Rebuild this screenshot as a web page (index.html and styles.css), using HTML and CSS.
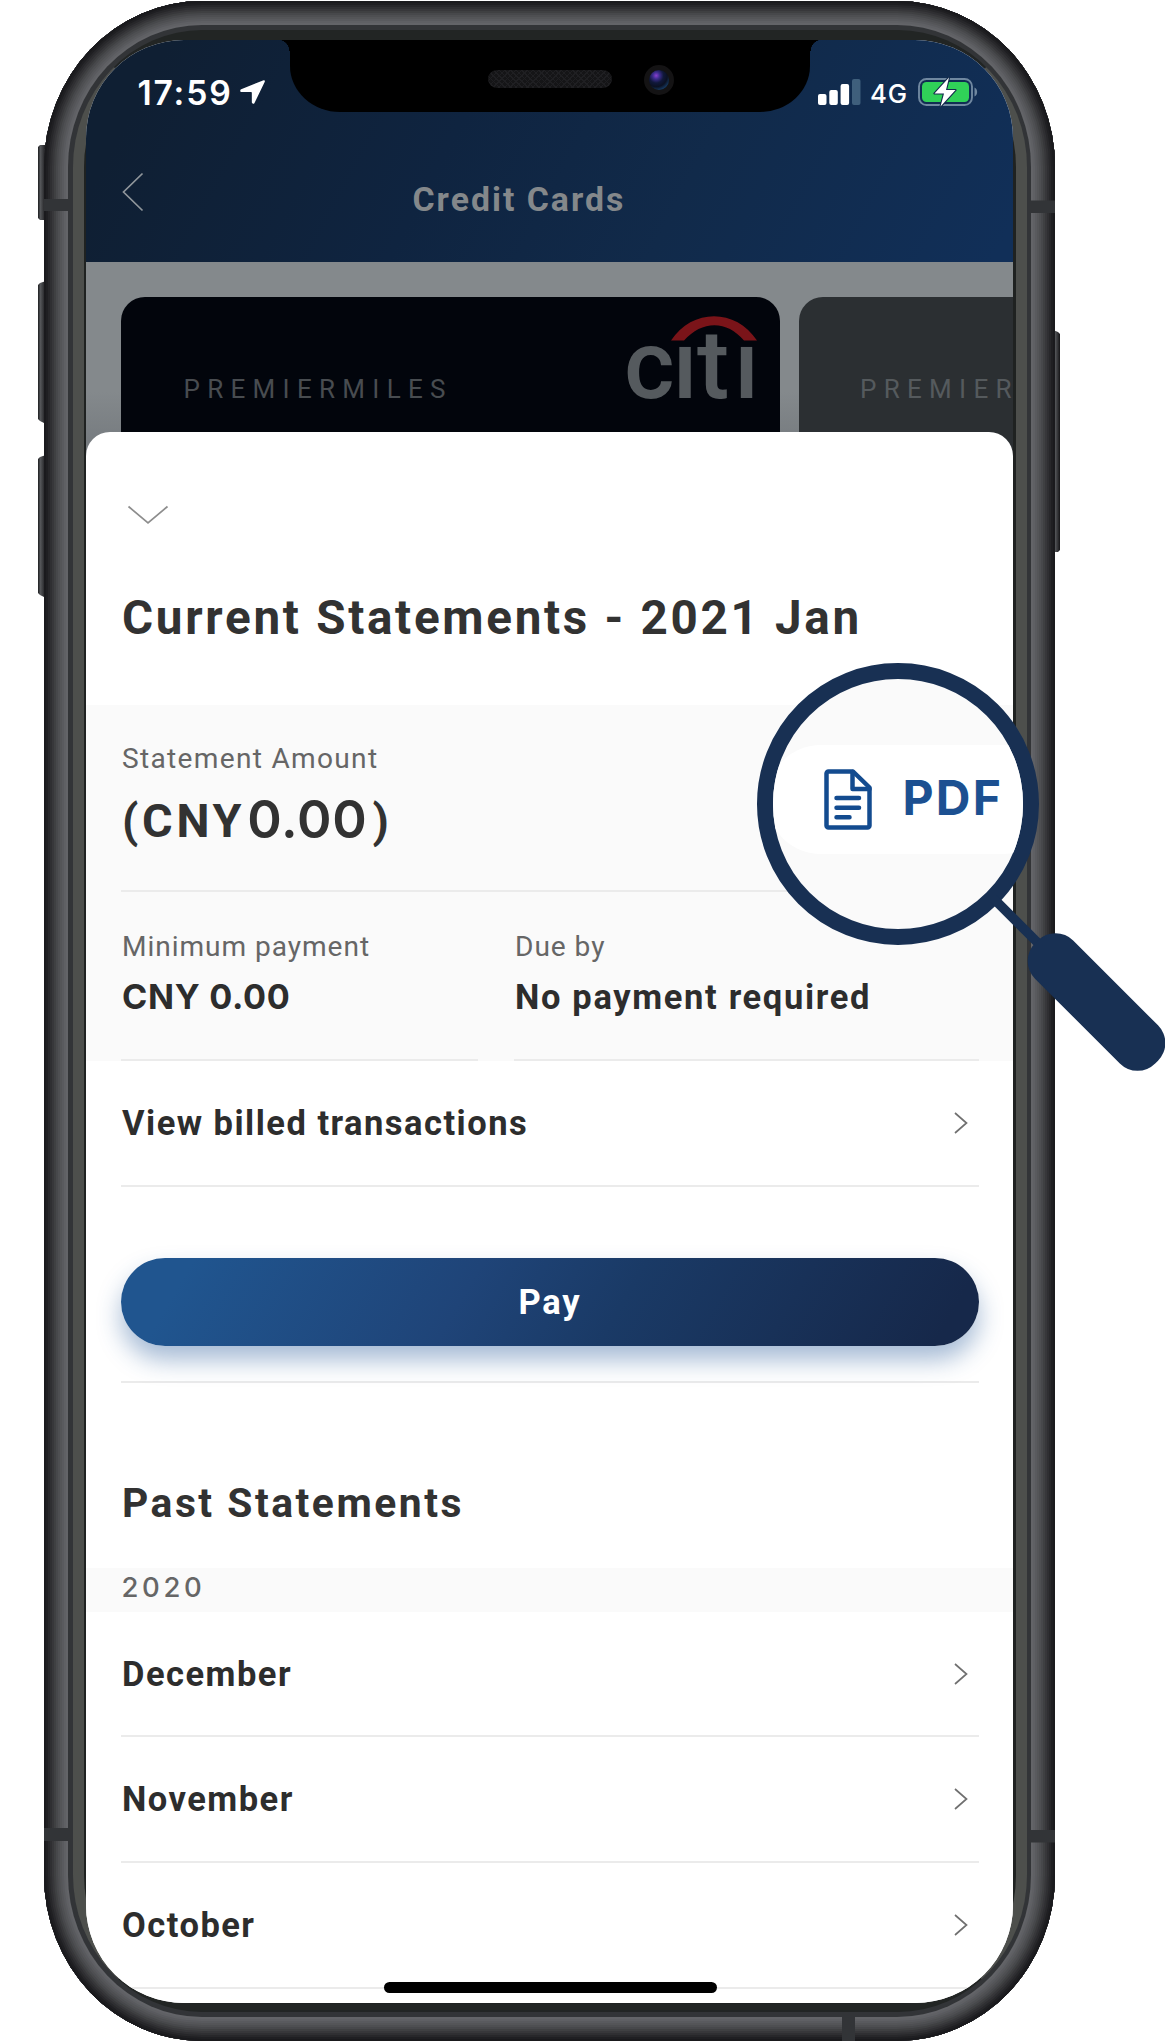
FILE: index.html
```html
<!DOCTYPE html>
<html lang="en">
<head>
<meta charset="utf-8">
<title>Credit Cards</title>
<link rel="stylesheet" href="styles.css">
</head>
<body>
<div class="stage">
  <svg class="side-buttons" width="1165" height="2042" viewBox="0 0 1165 2042" aria-hidden="true">
    <defs>
      <linearGradient id="btn" x1="0" x2="1" y1="0" y2="0">
        <stop offset="0" stop-color="#1c1d1f"/><stop offset=".3" stop-color="#55575a"/><stop offset=".6" stop-color="#3a3b3e"/><stop offset="1" stop-color="#141416"/>
      </linearGradient>
    </defs>
    <g fill="url(#btn)">
      <path d="M46 145h-6l-2 2v71l2 2h6z"/>
      <path d="M46 281l-6 2-2 2v134l2 2 6 3z"/>
      <path d="M46 455l-6 2-2 2v134l2 2 6 3z"/>
      <path d="M1053 330l5 2 2 2v216l-2 2h-5z"/>
    </g>
  </svg>

  <div class="device">
    <div class="rim">
      <div class="glass">
        <main class="screen">
          <header class="header">
            <div class="status">
              <div class="status-left">
                <span class="clock">17:59</span>
                <svg width="25" height="24" viewBox="0 0 26 25" fill="#fff"><path d="M24.6.3 1.2 9.6C-.3 10.200 0 12.500 1.500 12.500h10c.5 0 .8.3.8.8v10c0 1.700 2.200 2 2.800.6L25.800 1.700C26.200.6 25.500 0 24.600.3z"/></svg>
              </div>
              <div class="status-right">
                <svg width="43" height="28" viewBox="0 0 43 28" fill="#fff"><rect y="16" width="8.500" height="11" rx="2"/><rect x="11.300" y="12" width="8.500" height="15" rx="2"/><rect x="22.600" y="6" width="8.500" height="21" rx="2"/><rect x="34" y="1" width="8.500" height="26" rx="2" fill="#3f5f7c"/></svg>
                <span class="network">4G</span>
                <svg width="60" height="30" viewBox="0 0 60 30"><rect x="1" y="2" width="53" height="26" rx="7.500" fill="none" stroke="#7088a0" stroke-width="1.900"/><path d="M56.500 10.500c3.500 1.500 3.500 7.500 0 9z" fill="#7088a0"/><rect x="4" y="5" width="47" height="20" rx="4.500" fill="#30d158"/><path d="M31 .5 16.500 16.500h9.500L22.500 29.500 37.500 13H28z" fill="#fff" stroke="#132b4c" stroke-width="2.200" paint-order="stroke" stroke-linejoin="round"/></svg>
              </div>
            </div>
            <div class="nav">
              <svg class="back" width="22" height="40" viewBox="0 0 22 40" fill="none" stroke="#90969b" stroke-width="1.700"><path d="M20.500 1.500 1.500 20l19 18.500"/></svg>
              <h1>Credit Cards</h1>
            </div>
            <div class="notch">
              <div class="speaker"></div>
              <div class="camera"></div>
            </div>
          </header>

          <section class="cards">
            <article class="card card-dark">
              <span class="card-name">PREMIERMILES</span>
              <svg class="citi" width="134" height="90" viewBox="0 0 134 90">
                <path d="M43 25.500C64-7 108-7 129 25.500H116C99 5 74 5 56 25.500z" fill="#7a1419"/>
                <text y="83" x="-4 44.500 69 106" fill="#555a5e">cıtı</text>
              </svg>
            </article>
            <article class="card card-grey">
              <span class="card-name">PREMIERMILES</span>
            </article>
          </section>

          <section class="sheet">
            <div class="sheet-head">
              <svg width="42" height="20" viewBox="0 0 42 20" fill="none" stroke="#8d8d8d" stroke-width="1.700"><path d="M1.500 1.500 21 18 40.500 1.500"/></svg>
              <h2>Current Statements - 2021 Jan</h2>
            </div>

            <div class="summary">
              <div class="amount">
                <p class="label">Statement Amount</p>
                <p class="total"><span>(CNY</span><span class="figure">0.00</span><span>)</span></p>
              </div>
              <div class="facts">
                <div class="fact">
                  <p class="label">Minimum payment</p>
                  <p class="value value-num">CNY 0.00</p>
                </div>
                <div class="fact">
                  <p class="label">Due by</p>
                  <p class="value">No payment required</p>
                </div>
              </div>
            </div>

            <div class="row first"><span>View billed transactions</span><svg class="chev" viewBox="0 0 14 22"><path d="M1 1 12.500 11 1 21"/></svg></div>
            <div class="pay-wrap"><button class="pay" type="button">Pay</button></div>

            <h3>Past Statements</h3>
            <div class="year">2020</div>
            <div class="row"><span>December</span><svg class="chev" viewBox="0 0 14 22"><path d="M1 1 12.500 11 1 21"/></svg></div>
            <div class="row"><span>November</span><svg class="chev" viewBox="0 0 14 22"><path d="M1 1 12.500 11 1 21"/></svg></div>
            <div class="row"><span>October</span><svg class="chev" viewBox="0 0 14 22"><path d="M1 1 12.500 11 1 21"/></svg></div>
          </section>
          <div class="home-indicator"></div>
        </main>
      </div>
    </div>
  </div>

  <svg class="antennas" width="1165" height="2042" viewBox="0 0 1165 2042" fill="#323437" aria-hidden="true">
    <rect x="44" y="199" width="25" height="12"/><rect x="1031" y="200.500" width="24" height="12.500"/>
    <rect x="44" y="1828" width="25" height="13"/><rect x="1031" y="1830" width="24" height="12.500"/>
    <rect x="842" y="2017" width="13" height="24"/>
  </svg>

  <div class="lens">
    <div class="pdf">
      <svg width="48" height="61" viewBox="0 0 48 61" fill="none" stroke="#134b8f" stroke-width="4.500" stroke-linejoin="round" stroke-linecap="round"><path d="M29 2.500H4.500a2 2 0 0 0-2 2v52a2 2 0 0 0 2 2h39a2 2 0 0 0 2-2V18.500z"/><path d="M28.500 3v17h17M12.500 29h22.500M12.500 38.700h22.500M12.500 48.300h13"/></svg>
      <span>PDF</span>
    </div>
  </div>
  <svg class="handle" width="175" height="180" viewBox="990 895 175 180" aria-hidden="true">
    <path d="M992 897 1045 950" stroke="#183053" stroke-width="9.500"/>
    <rect x="-27" y="-85" width="54" height="170" rx="25" transform="translate(1096.500 1002) rotate(-45)" fill="#183053"/>
  </svg>
</div>
</body>
</html>
```
FILE: styles.css
```css
* { box-sizing: border-box; }

body, h1, h2, h3, p { margin: 0; }

body {
  background: #fff;
  font-family: Roboto, "Liberation Sans", sans-serif;
  color: #2d2d2d;
}

svg { display: block; flex: none; }

.stage {
  position: relative;
  width: 1165px;
  height: 2042px;
  padding: 1px 0 0 44px;
  overflow: hidden;
}

.side-buttons, .antennas {
  position: absolute;
  left: 0;
  top: 0;
}

/* Metal frame: concentric rings shade from dark outside to light inside */
.device {
  position: relative;
  width: 1011px;
  height: 2039.5px;
  padding: 23.5px 24px;
  border-radius: 158px / 166px;
  background: #636468;
  box-shadow:
    inset 0 0 0 2px #1a1a1d,
    inset 0 0 0 4px #1f1f22,
    inset 0 0 0 6px #27272a,
    inset 0 0 0 8px #2f2f32,
    inset 0 0 0 10px #37373a,
    inset 0 0 0 12px #3f4042,
    inset 0 0 0 14px #47484b,
    inset 0 0 0 16px #4e4f52,
    inset 0 0 0 18px #545558,
    inset 0 0 0 20px #595a5e,
    inset 0 0 0 22px #5f6064;
}

.rim {
  height: 100%;
  padding: 5px 4.5px;
  border-radius: 134px / 142px;
  background: #323437;
}

.glass {
  height: 100%;
  border-style: solid;
  border-width: 10px 11.5px 8px;
  border-color: #222524 #4d4f4c;
  border-radius: 129px / 137px;
  background: #1f2221;
  padding: 0 2px 0 2px;
}

.screen {
  position: relative;
  width: 927px;
  height: 1963px;
  border-radius: 98px;
  overflow: hidden;
  background: #fff;
}

.header {
  position: relative;
  height: 222px;
  background: linear-gradient(118deg, #0f1f33 8%, #0f2440 40%, #112a4a 65%, #112f58 98%);
}

.status {
  display: flex;
  justify-content: space-between;
  height: 104px;
  padding: 0 35px 0 52px;
  color: #fff;
}

.status-left, .status-right { display: flex; align-items: center; }

.clock {
  width: 102.5px;
  padding-top: 2px;
  font: 600 33.7px/40px Inter, sans-serif;
  letter-spacing: 1.8px;
}

.network {
  width: 56.5px;
  padding: 4px 0 0 9px;
  font: 500 25.8px/30px Inter, sans-serif;
  letter-spacing: 0.8px;
}

.nav { display: flex; height: 118px; padding-left: 36px; }

.back { margin-top: 28px; }

.nav h1 {
  margin: 36px 0 0 269px;
  font-size: 33.8px;
  line-height: 40px;
  letter-spacing: 2px;
  color: #84888b;
}

.notch {
  position: absolute;
  left: 204px;
  top: 0;
  width: 520px;
  height: 72px;
  background: #000;
  border-radius: 0 0 50px 50px / 0 0 46px 46px;
}

.notch::before, .notch::after {
  content: "";
  position: absolute;
  top: 0;
  width: 12px;
  height: 11px;
}

.notch::before { left: -12px; background: radial-gradient(circle at 0 100%, transparent 11px, #000 11.5px); }
.notch::after { right: -12px; background: radial-gradient(circle at 100% 100%, transparent 11px, #000 11.5px); }

.speaker {
  position: absolute;
  left: 198px;
  top: 30px;
  width: 124px;
  height: 18px;
  border-radius: 9px;
  background:
    repeating-linear-gradient(45deg, #1f1f22 0 1px, transparent 1px 4px),
    repeating-linear-gradient(-45deg, #1f1f22 0 1px, transparent 1px 4px),
    #151517;
}

.camera {
  position: absolute;
  left: 354px;
  top: 25px;
  width: 30px;
  height: 30px;
  border: 5px solid #141314;
  border-radius: 50%;
  background: radial-gradient(circle at 36% 28%, #8a3fd0 0, #3b2c8c 18%, #10183a 38%, #0b1122 58%, #1f5f9c 95%);
}

.cards {
  display: flex;
  gap: 19px;
  height: 194px;
  padding: 35px 0 0 35.5px;
  background: linear-gradient(#84898c 130px, #777c80 180px);
}

.card {
  display: flex;
  flex: none;
  width: 658.5px;
  border-radius: 24px 24px 0 0;
}

.card-dark { background: #02050c; color: #484c50; }
.card-grey { background: #2b2f32; color: #555a5d; }

.card-name {
  width: 442px;
  padding: 77px 0 0 62.5px;
  font-size: 26px;
  line-height: 30px;
  letter-spacing: 7.3px;
}

.card-grey .card-name { padding-left: 61.5px; }

.citi { margin: 18px 0 0 65px; overflow: visible; font: 500 97px Roboto, sans-serif; }

.sheet {
  position: relative;
  margin-top: -24px;
  height: 1571px;
  border-radius: 24px 24px 0 0;
  background: #fff;
}

.sheet-head { height: 273px; padding: 73px 33px 0 41.5px; }

.sheet-head h2 {
  margin: 63px 0 0 -5px;
  font-size: 47.6px;
  line-height: 60px;
  letter-spacing: 2.7px;
  color: #323232;
  white-space: nowrap;
}

.summary { height: 356px; padding: 0 33.5px 0 35.5px; background: #fafafa; }

.amount { height: 187px; padding-top: 34px; border-bottom: 2px solid #ebebeb; }

.label {
  padding-left: 1px;
  font-size: 28.1px;
  line-height: 40px;
  letter-spacing: 0.95px;
  color: #666;
}

.amount .label { letter-spacing: 1.3px; }

.total {
  display: flex;
  margin-top: 12px;
  padding-left: 1px;
  font: 700 46.8px/60px Roboto, sans-serif;
  letter-spacing: 3.7px;
  color: #323232;
}

.total .figure {
  margin: -2px 5px 0 2px;
  font: 600 52.3px/60px Inter, sans-serif;
  letter-spacing: 0.8px;
}

.facts { display: grid; grid-template-columns: 357px 1fr; gap: 36px; }

.fact { height: 169px; padding-top: 35px; border-bottom: 2px solid #ebebeb; }

.value {
  margin-top: 10px;
  padding-left: 1px;
  font-size: 34.5px;
  font-weight: 700;
  line-height: 40px;
  letter-spacing: 1.65px;
}

.value-num { font: 700 34.2px/40px Inter, sans-serif; letter-spacing: 0.7px; }

.row {
  display: flex;
  align-items: center;
  justify-content: space-between;
  height: 125.6px;
  margin: 0 33.5px 0 35.5px;
  padding: 0 11px 0 1px;
  border-bottom: 2px solid #ebebeb;
  font-size: 34.5px;
  font-weight: 700;
  letter-spacing: 1.48px;
}

.first { height: 126.4px; }

.chev { width: 14px; height: 22px; fill: none; stroke: #707070; stroke-width: 1.7; }

.pay-wrap {
  height: 196px;
  margin: 0 33.5px 0 35.5px;
  padding-top: 71px;
  border-bottom: 2px solid #ebebeb;
}

.pay {
  display: block;
  width: 100%;
  height: 88px;
  border: 0;
  border-radius: 44px;
  background: linear-gradient(120deg, #20558f 8%, #1f4478 40%, #1a3a66 58%, #16284a 95%);
  box-shadow: 0 14px 24px rgba(32, 85, 150, 0.4);
  font: 700 34.5px/40px Roboto, sans-serif;
  letter-spacing: 1.8px;
  color: #fff;
}

h3 {
  height: 185px;
  padding: 95.500px 0 0 36.500px;
  font-size: 40.8px;
  line-height: 50px;
  letter-spacing: 2.5px;
  color: #323232;
}

.year {
  height: 44px;
  padding: 0 0 0 36px;
  background: #fafafa;
  font: 500 27.5px/38px Inter, sans-serif;
  letter-spacing: 3.6px;
  color: #666;
}

.home-indicator {
  position: absolute;
  left: 298px;
  top: 1942px;
  width: 333px;
  height: 11.500px;
  border-radius: 6px;
  background: #000;
}

.lens {
  position: absolute;
  left: 757px;
  top: 663px;
  width: 281.500px;
  height: 281.500px;
  border: 16.500px solid #183053;
  border-radius: 50%;
  background: #fafafa;
  overflow: hidden;
}

.pdf {
  display: flex;
  align-items: center;
  gap: 31px;
  width: 290px;
  height: 108.500px;
  margin: 66px 0 0 -6px;
  padding-left: 56.500px;
  border-radius: 54px;
  background: #fff;
  font: 700 48px/60px Inter, sans-serif;
  letter-spacing: 2.200px;
  color: #1c5091;
}

.pdf span { margin-top: -3px; }

.handle { position: absolute; left: 990px; top: 895px; }
```
